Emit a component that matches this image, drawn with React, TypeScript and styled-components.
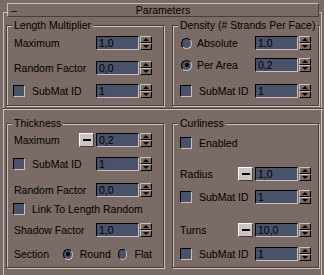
import React from "react";
import styled, { createGlobalStyle } from "styled-components";

const colors = {
  bg: "#7b6b67",
  light: "#cbc1bc",
  dark: "#4a3e3b",
  black: "#000000",
  field: "#4a5269",
  button: "#c9c5c1",
};

const GlobalStyle = createGlobalStyle`
  html, body {
    margin: 0;
    padding: 0;
    background: ${colors.bg};
  }
  body {
    font-family: "Liberation Sans", Arial, sans-serif;
    font-size: 10.5px;
    color: ${colors.black};
  }
`;

const Page = styled.div`
  width: 324px;
  height: 275px;
  overflow: hidden;
  box-sizing: border-box;
  padding-top: 3px;
  background: ${colors.bg};
`;

const Header = styled.div`
  position: relative;
  z-index: 1;
  display: flex;
  align-items: center;
  height: 14px;
  margin: 0 5px 0 7px;
  box-sizing: border-box;
  background: ${colors.bg};
  border-top: 1px solid ${colors.light};
  border-left: 1px solid ${colors.light};
  border-right: 1px solid ${colors.dark};
  border-bottom: 1px solid ${colors.dark};
  line-height: 12px;
`;

const HeaderSign = styled.span`
  width: 12px;
  padding-left: 3px;
`;

const HeaderTitle = styled.span`
  flex: 1;
  text-align: center;
  padding-right: 15px;
`;

const Rollout = styled.div`
  display: grid;
  grid-template-columns: 158px 147px;
  grid-template-rows: 81px 17px 145px;
  column-gap: 8px;
  height: 263px;
  margin: -5px 2px 0 3px;
  padding: 12px 3px 0 2px;
  box-sizing: border-box;
  border: 1px solid ${colors.light};
  border-bottom: none;
`;

const Divider = styled.div`
  grid-column: 1 / -1;
  align-self: start;
  height: 2px;
  margin: 2px -4px 0 -3px;
  box-sizing: border-box;
  border-top: 1px solid ${colors.dark};
  border-bottom: 1px solid ${colors.light};
`;

const Group = styled.div<{ $pr: number }>`
  display: flex;
  flex-direction: column;
  box-sizing: border-box;
  padding: 0 ${(p) => p.$pr}px 0 7px;
  border: 1px solid ${colors.dark};
  box-shadow: inset 1px 1px 0 ${colors.light}, 1px 1px 0 ${colors.light};
`;

const GroupTitle = styled.div`
  align-self: flex-start;
  height: 13px;
  line-height: 13px;
  margin: -7px 0 0 -2px;
  padding: 0 2px;
  background: ${colors.bg};
  white-space: nowrap;
`;

const Row = styled.div<{ $mt: number }>`
  display: flex;
  align-items: center;
  height: 14px;
  margin-top: ${(p) => p.$mt}px;
  white-space: nowrap;
`;

const Label = styled.span`
  flex: 1;
`;

const InlineLabel = styled.span<{ $ml: number }>`
  margin-left: ${(p) => p.$ml}px;
`;

const Field = styled.div`
  width: 43px;
  height: 14px;
  box-sizing: border-box;
  padding-left: 2px;
  line-height: 12px;
  background: ${colors.field};
  border-top: 1px solid ${colors.black};
  border-left: 1px solid ${colors.black};
  border-right: 1px solid ${colors.light};
  border-bottom: 1px solid ${colors.light};
`;

const Spinner = styled.div`
  display: flex;
  flex-direction: column;
  width: 12px;
  height: 14px;
  margin-left: 1px;
`;

const SpinHalf = styled.div`
  flex: 1;
  display: flex;
  align-items: center;
  justify-content: center;
  box-sizing: border-box;
  background: ${colors.bg};
  border-top: 1px solid ${colors.light};
  border-left: 1px solid ${colors.light};
  border-right: 1px solid ${colors.black};
  border-bottom: 1px solid ${colors.black};
`;

const Arrow = styled.span<{ $down?: boolean }>`
  width: 0;
  height: 0;
  border-left: 3px solid transparent;
  border-right: 3px solid transparent;
  ${(p) =>
    p.$down
      ? `border-top: 3px solid ${colors.black};`
      : `border-bottom: 3px solid ${colors.black};`}
`;

const MinusButton = styled.div`
  display: flex;
  align-items: center;
  justify-content: center;
  width: 15px;
  height: 14px;
  margin-right: 2px;
  box-sizing: border-box;
  background: ${colors.button};
  border-top: 1px solid #ffffff;
  border-left: 1px solid #ffffff;
  border-right: 1px solid ${colors.dark};
  border-bottom: 1px solid ${colors.dark};

  &::after {
    content: "";
    width: 8px;
    height: 2px;
    background: ${colors.black};
  }
`;

const Check = styled.span<{ $ml: number }>`
  width: 12px;
  height: 12px;
  margin: 0 7px 0 ${(p) => p.$ml}px;
  box-sizing: border-box;
  background: ${colors.field};
  border-top: 1px solid ${colors.black};
  border-left: 1px solid ${colors.black};
  border-right: 1px solid ${colors.light};
  border-bottom: 1px solid ${colors.light};
`;

const Radio = styled.span<{ $on?: boolean; $ml: number }>`
  display: flex;
  align-items: center;
  justify-content: center;
  width: 11px;
  height: 11px;
  margin: 0 5px 0 ${(p) => p.$ml}px;
  box-sizing: border-box;
  border-radius: 50%;
  background: ${colors.field};
  border: 1px solid;
  border-color: ${colors.black} ${colors.light} ${colors.light} ${colors.black};

  &::after {
    content: "";
    display: ${(p) => (p.$on ? "block" : "none")};
    width: 4px;
    height: 4px;
    border-radius: 50%;
    background: ${colors.black};
  }
`;

const SpinField: React.FC<{ value: string }> = ({ value }) => (
  <>
    <Field>{value}</Field>
    <Spinner>
      <SpinHalf>
        <Arrow />
      </SpinHalf>
      <SpinHalf>
        <Arrow $down />
      </SpinHalf>
    </Spinner>
  </>
);

export default function App() {
  return (
    <Page>
      <GlobalStyle />
      <Header>
        <HeaderSign>–</HeaderSign>
        <HeaderTitle>Parameters</HeaderTitle>
      </Header>

      <Rollout>
        <Group $pr={11}>
          <GroupTitle>Length Multiplier</GroupTitle>
          <Row $mt={4}>
            <Label>Maximum</Label>
            <SpinField value="1,0" />
          </Row>
          <Row $mt={11}>
            <Label>Random Factor</Label>
            <SpinField value="0,0" />
          </Row>
          <Row $mt={9}>
            <Check $ml={-1} />
            <Label>SubMat ID</Label>
            <SpinField value="1" />
          </Row>
        </Group>

        <Group $pr={7}>
          <GroupTitle>Density (# Strands Per Face)</GroupTitle>
          <Row $mt={4}>
            <Radio $ml={1} />
            <Label>Absolute</Label>
            <SpinField value="1,0" />
          </Row>
          <Row $mt={8}>
            <Radio $ml={1} $on />
            <Label>Per Area</Label>
            <SpinField value="0,2" />
          </Row>
          <Row $mt={12}>
            <Check $ml={0} />
            <Label>SubMat ID</Label>
            <SpinField value="1" />
          </Row>
        </Group>

        <Divider />

        <Group $pr={11}>
          <GroupTitle>Thickness</GroupTitle>
          <Row $mt={3}>
            <Label>Maximum</Label>
            <MinusButton />
            <SpinField value="0,2" />
          </Row>
          <Row $mt={10}>
            <Check $ml={-1} />
            <Label>SubMat ID</Label>
            <SpinField value="1" />
          </Row>
          <Row $mt={12}>
            <Label>Random Factor</Label>
            <SpinField value="0,0" />
          </Row>
          <Row $mt={5}>
            <Check $ml={-1} />
            <Label>Link To Length Random</Label>
          </Row>
          <Row $mt={7}>
            <Label>Shadow Factor</Label>
            <SpinField value="1,0" />
          </Row>
          <Row $mt={10}>
            <InlineLabel $ml={0}>Section</InlineLabel>
            <Radio $ml={14} $on />
            <InlineLabel $ml={2}>Round</InlineLabel>
            <Radio $ml={7} />
            <InlineLabel $ml={2}>Flat</InlineLabel>
          </Row>
        </Group>

        <Group $pr={7}>
          <GroupTitle>Curliness</GroupTitle>
          <Row $mt={6}>
            <Check $ml={0} />
            <Label>Enabled</Label>
          </Row>
          <Row $mt={17}>
            <Label>Radius</Label>
            <MinusButton />
            <SpinField value="1,0" />
          </Row>
          <Row $mt={9}>
            <Check $ml={0} />
            <Label>SubMat ID</Label>
            <SpinField value="1" />
          </Row>
          <Row $mt={19}>
            <Label>Turns</Label>
            <MinusButton />
            <SpinField value="10,0" />
          </Row>
          <Row $mt={10}>
            <Check $ml={0} />
            <Label>SubMat ID</Label>
            <SpinField value="1" />
          </Row>
        </Group>
      </Rollout>
    </Page>
  );
}
